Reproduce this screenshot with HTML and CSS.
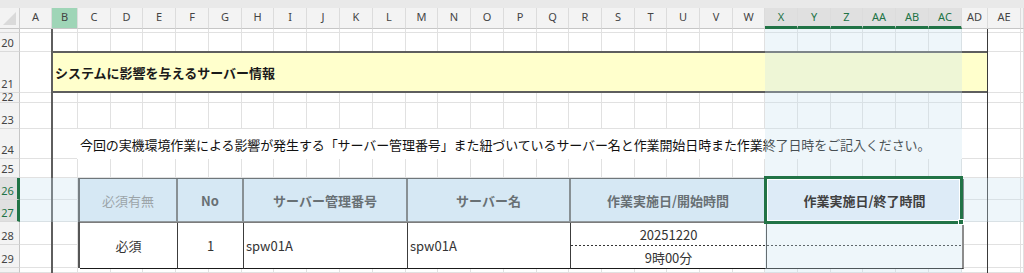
FILE: index.html
```html
<!DOCTYPE html>
<html lang="ja">

<head>
    <meta charset="UTF-8">
    <meta name="viewport" content="width=device-width, initial-scale=1.0">
    <title>システムに影響を与えるサーバー情報</title>
    <link rel="stylesheet" href="styles.css">
</head>

<body>
    <div class="sheet">
        <div class="ribbon-edge"></div>

        <div class="corner"><span class="corner-tri"></span></div>

        <div class="col-heads">
            <div>A</div><div class="hover">B</div><div>C</div><div>D</div><div>E</div><div>F</div>
            <div>G</div><div>H</div><div>I</div><div>J</div><div>K</div><div>L</div>
            <div>M</div><div>N</div><div>O</div><div>P</div><div>Q</div><div>R</div>
            <div>S</div><div>T</div><div>U</div><div>V</div><div>W</div>
            <div class="sel">X</div><div class="sel">Y</div><div class="sel">Z</div>
            <div class="sel">AA</div><div class="sel">AB</div><div class="sel">AC</div>
            <div>AD</div><div>AE</div><div></div>
        </div>

        <div class="row-heads">
            <div></div>
            <div>20</div>
            <div>21</div>
            <div class="short">22</div>
            <div>23</div>
            <div>24</div>
            <div>25</div>
            <div class="sel">26</div>
            <div class="sel">27</div>
            <div>28</div>
            <div>29</div>
            <div></div>
        </div>

        <!-- grid lines -->
        <div class="vlines">
            <div></div><div></div><div></div><div></div><div></div><div></div><div></div><div></div>
            <div></div><div></div><div></div><div></div><div></div><div></div><div></div><div></div>
            <div></div><div></div><div></div><div></div><div></div><div></div><div></div><div></div>
            <div></div><div></div><div></div><div></div><div></div><div></div><div></div><div></div>
        </div>
        <div class="hlines">
            <div></div><div></div><div></div><div></div><div></div><div></div>
            <div></div><div></div><div></div><div></div><div></div><div></div>
        </div>

        <div class="title-band">システムに影響を与えるサーバー情報</div>

        <div class="frame"></div>

        <p class="note">今回の実機環境作業による影響が発生する「サーバー管理番号」また紐づいているサーバー名と作業開始日時また作業終了日時をご記入ください。</p>

        <div class="server-table">
            <div class="th th-muted">必須有無</div>
            <div class="th">No</div>
            <div class="th">サーバー管理番号</div>
            <div class="th">サーバー名</div>
            <div class="th">作業実施日/開始時間</div>
            <div class="th th-last">作業実施日/終了時間</div>

            <div class="td td-center td-tall">必須</div>
            <div class="td td-center td-tall">1</div>
            <div class="td td-tall">spw01A</div>
            <div class="td td-tall">spw01A</div>
            <div class="td td-center td-split">20251220</div>
            <div class="td td-split td-last"></div>
            <div class="td td-center">9時00分</div>
            <div class="td td-last"></div>
        </div>

        <!-- selection shading -->
        <div class="tint tint-row-left"></div>
        <div class="tint tint-row-right"></div>
        <div class="tint tint-col-top"></div>
        <div class="tint tint-col-bottom"></div>

        <div class="active-cell"><span class="fill-handle"></span></div>
    </div>
</body>

</html>
```

FILE: styles.css
```css
:root {
    --cols: 32px 26px 33px 32px 33px 33px 33px 32px 33px 33px 33px 33px 32px 33px 33px 33px 32px 33px 33px 32px 33px 33px 32px 33px 33px 32px 33px 33px 33px 26px 33px 1fr;
    --rows: 4px 19px 41px 10px 26px 30px 19px 22px 22px 23px 23px 1fr;
}

* {
    box-sizing: border-box;
}

body {
    margin: 0;
    background: #fff;
    font-family: "Noto Sans CJK JP", "Noto Sans", sans-serif;
    color: #1f1f1f;
    overflow: hidden;
}

.sheet {
    display: grid;
    grid-template-columns: 20px var(--cols);
    grid-template-rows: 8px 21px var(--rows);
    width: 1024px;
    height: 273px;
    overflow: hidden;
}

.ribbon-edge {
    grid-column: 1 / -1;
    grid-row: 1;
    background: #e9e9e9;
}

/* headings */
.corner {
    grid-column: 1;
    grid-row: 2;
    background: #f3f3f3;
    border-right: 1px solid #cfcfcf;
    border-bottom: 1px solid #c6c6c6;
    display: flex;
    align-items: flex-end;
    justify-content: flex-end;
    padding: 0 3px 3px 0;
}

.corner-tri {
    width: 0;
    height: 0;
    border-left: 13px solid transparent;
    border-bottom: 13px solid #dadada;
}

.col-heads {
    grid-column: 2 / -1;
    grid-row: 2;
    display: grid;
    grid-template-columns: var(--cols);
    background: #f3f3f3;
}

.col-heads div {
    display: flex;
    align-items: center;
    justify-content: center;
    padding-bottom: 4px;
    border-right: 1px solid #dcdcdc;
    border-bottom: 1px solid #c6c6c6;
    font: 11px "Noto Sans", sans-serif;
    color: #444;
}

.col-heads .hover {
    background: #9fd5b7;
}

.col-heads .sel {
    background: #e0e0e0;
    color: #217346;
    border-bottom: 3px solid #217346;
    padding-bottom: 2px;
}

.row-heads {
    grid-column: 1;
    grid-row: 3 / -1;
    display: grid;
    grid-template-rows: var(--rows);
    background: #f3f3f3;
}

.row-heads div {
    display: flex;
    align-items: flex-end;
    justify-content: center;
    padding: 0 4px 3px 0;
    border-right: 1px solid #c6c6c6;
    border-bottom: 1px solid #dadada;
    font: 11px/11px "Noto Sans", sans-serif;
    color: #444;
    overflow: hidden;
}

.row-heads .short {
    padding-bottom: 0;
    font-size: 10px;
    line-height: 9px;
}

.row-heads .sel {
    background: #e0e0e0;
    color: #217346;
    border-right: 3px solid #217346;
    padding-right: 2px;
}

/* cell grid lines */
.vlines {
    grid-column: 2 / -1;
    grid-row: 3 / -1;
    display: grid;
    grid-template-columns: var(--cols);
}

.vlines div {
    border-right: 1px solid #e1e1e1;
}

.hlines {
    grid-column: 2 / -1;
    grid-row: 3 / -1;
    display: grid;
    grid-template-rows: var(--rows);
}

.hlines div {
    border-bottom: 1px solid #e1e1e1;
}

/* content */
.title-band {
    grid-column: 3 / 32;
    grid-row: 5;
    margin-top: -1px;
    background: #ffffcc;
    border-top: 2px solid #5e5e5e;
    border-bottom: 2px solid #5e5e5e;
    display: flex;
    align-items: center;
    padding-left: 3px;
    font-size: 13px;
    font-weight: bold;
    color: #1a1a1a;
}

.frame {
    grid-column: 3 / 32;
    grid-row: 3 / -1;
    margin-left: -1px;
    border-left: 2px solid #5e5e5e;
    border-right: 1px solid #3a3a3a;
}

.note {
    grid-column: 4 / 31;
    grid-row: 8;
    margin: 0 0 0 -1px;
    padding-left: 3px;
    display: flex;
    align-items: center;
    background: #fff;
    white-space: nowrap;
    font-size: 13px;
    letter-spacing: -0.1px;
    color: #111;
}

.server-table {
    grid-column: 4 / 31;
    grid-row: 10 / 14;
    display: grid;
    grid-template-columns: 98px 66px 164px 163px 196px 197px;
    grid-template-rows: 44px 23px 23px;
    border-top: 1px solid #4a4a4a;
    border-left: 2px solid #555;
    font-size: 13px;
}

.th {
    display: flex;
    align-items: center;
    justify-content: center;
    background: #ddebf7;
    border-right: 2px solid #6e6e6e;
    border-bottom: 2px solid #7c7c7c;
    font-weight: bold;
    color: #404040;
}

.th-muted {
    font-weight: normal;
    color: #8a8a8a;
}

.td {
    display: flex;
    align-items: center;
    padding-left: 2px;
    background: #fff;
    border-right: 1px solid #3c3c3c;
    border-bottom: 1px solid #1a1a1a;
    color: #333;
}

.td-center {
    justify-content: center;
    padding-left: 0;
}

.td-tall {
    grid-row: span 2;
}

.td-split {
    border-bottom: none;
    background: #fff repeating-linear-gradient(to right, #333 0 2px, transparent 2px 4px) bottom / 100% 1px no-repeat;
}

.td-last {
    border-right: 2px solid #8c8c8c;
}

/* selection */
.tint {
    background: rgba(198, 225, 238, 0.3);
}

.tint-row-left {
    grid-column: 2 / 25;
    grid-row: 10 / 12;
}

.tint-row-right {
    grid-column: 31 / -1;
    grid-row: 10 / 12;
}

.tint-col-top {
    grid-column: 25 / 31;
    grid-row: 3 / 10;
}

.tint-col-bottom {
    grid-column: 25 / 31;
    grid-row: 12 / -1;
}

.active-cell {
    grid-column: 25 / 31;
    grid-row: 10 / 12;
    position: relative;
    margin: -2px -1px -2px -1px;
    border: 3px solid #217346;
    box-shadow: inset 0 0 0 1px #fff;
}

.fill-handle {
    position: absolute;
    right: -4px;
    bottom: -4px;
    width: 6px;
    height: 6px;
    background: #217346;
    border: 1px solid #fff;
}
```
